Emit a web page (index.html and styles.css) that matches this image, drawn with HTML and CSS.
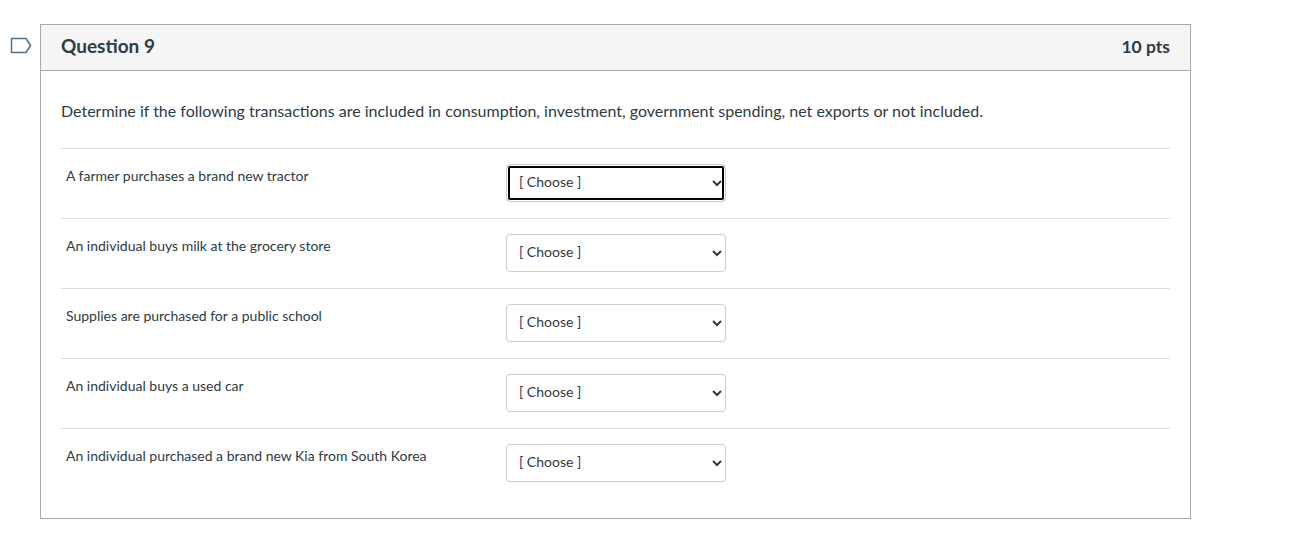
FILE: index.html
```html
<!DOCTYPE html>
<html lang="en">
<head>
<meta charset="utf-8">
<title>Question 9</title>
<link rel="stylesheet" href="styles.css">
</head>
<body>
<div class="page">
  <div class="flag-col">
    <svg class="flag" width="22" height="17" viewBox="0 0 22 17" aria-hidden="true">
      <path d="M1.5 1.5 H16 L20.5 8.5 L16 15.5 H1.5 Z" fill="none" stroke="#4f6f8f" stroke-width="1.5" stroke-linejoin="round"/>
    </svg>
  </div>
  <div class="card">
    <div class="card-header">
      <span class="q-title">Question 9</span>
      <span class="q-pts">10 pts</span>
    </div>
    <div class="card-body">
      <p class="desc">Determine if the following transactions are included in consumption, investment, government spending, net exports or not included.</p>
      <div class="row">
        <div class="label">A farmer purchases a brand new tractor</div>
        <select class="choice focused"><option>[ Choose ]</option></select>
      </div>
      <div class="row">
        <div class="label">An individual buys milk at the grocery store</div>
        <select class="choice"><option>[ Choose ]</option></select>
      </div>
      <div class="row">
        <div class="label">Supplies are purchased for a public school</div>
        <select class="choice"><option>[ Choose ]</option></select>
      </div>
      <div class="row">
        <div class="label">An individual buys a used car</div>
        <select class="choice"><option>[ Choose ]</option></select>
      </div>
      <div class="row">
        <div class="label">An individual purchased a brand new Kia from South Korea</div>
        <select class="choice"><option>[ Choose ]</option></select>
      </div>
    </div>
  </div>
</div>
</body>
</html>
```
FILE: styles.css
```css
html, body {
  margin: 0;
  padding: 0;
  background: #fff;
}
body {
  font-family: Lato, "Noto Sans", sans-serif;
  color: #2d3b45;
}
.page {
  display: flex;
  padding-top: 24px;
}
.flag-col {
  width: 40px;
  flex: none;
  padding-top: 13px;
  padding-left: 10px;
  box-sizing: border-box;
}
.flag {
  display: block;
}
.card {
  width: 1151px;
  box-sizing: border-box;
  border: 1px solid #aaa;
}
.card-header {
  display: flex;
  justify-content: space-between;
  align-items: center;
  height: 46px;
  box-sizing: border-box;
  padding: 0 20px 5px;
  background: #f5f5f5;
  border-bottom: 1px solid #aaa;
}
.q-title {
  font-weight: 700;
  font-size: 19px;
}
.q-pts {
  font-weight: 700;
  font-size: 17.5px;
  padding-top: 2px;
}
.card-body {
  padding: 28px 20px 20px;
}
.desc {
  margin: 0 0 25px;
  font-size: 16px;
  line-height: 24px;
}
.row {
  display: flex;
  align-items: flex-start;
  height: 69px;
  border-top: 1px solid #ddd;
}
.label {
  width: 440px;
  padding: 16px 0 0 5px;
  font-size: 14px;
  line-height: 21px;
  flex: none;
}
.choice {
  margin-top: 15px;
  width: 220px;
  height: 38px;
  box-sizing: border-box;
  border: 1px solid #c7cdd1;
  border-radius: 4px;
  background: #fff;
  font-family: Lato, "Noto Sans", sans-serif;
  font-size: 14px;
  color: #2d3b45;
  padding: 0 6px 3px 8px;
}
.choice.focused {
  box-shadow: inset 0 0 0 1px #fff, inset 0 0 0 3px #000;
  outline: none;
}
```
